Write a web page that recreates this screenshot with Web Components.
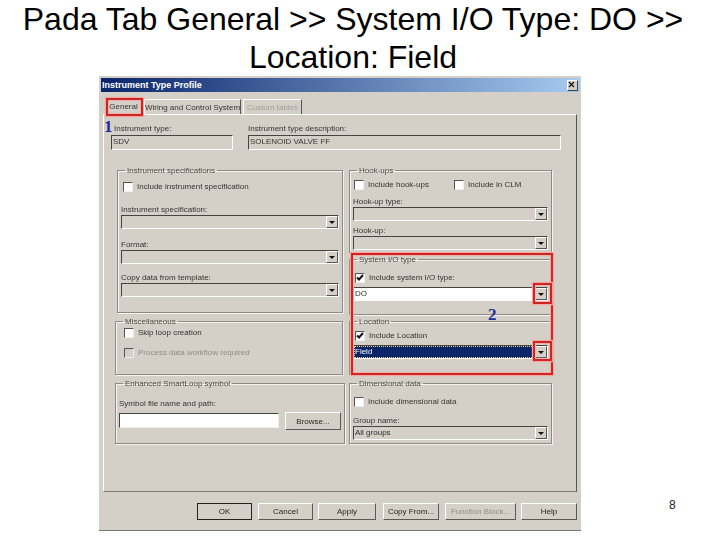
<!DOCTYPE html>
<html>
<head>
<meta charset="utf-8">
<style>
  html, body { margin: 0; background: #fff; }
  body { width: 720px; height: 540px; overflow: hidden; font-family: "Liberation Sans", Arial, sans-serif; }
</style>
</head>
<body>
<slide-page>
  <span slot="title">Pada Tab General &gt;&gt; System I/O Type: DO &gt;&gt;<br>Location: Field</span>
  <profile-dialog></profile-dialog>
</slide-page>

<script>
class SlidePage extends HTMLElement {
    connectedCallback() {
        this.attachShadow({ mode: 'open' });
        this.shadowRoot.innerHTML = `
            <style>
                :host { display: block; }
                h1 {
                    margin: 0;
                    height: 76px;
                    padding-right: 14px;
                    font: 400 32px/38px "Liberation Sans", Arial, sans-serif;
                    color: #000;
                    text-align: center;
                    white-space: nowrap;
                }
                .row { display: flex; padding-left: 99px; }
                .num {
                    margin: 422px 0 0 88px;
                    font-size: 12px;
                    line-height: 14px;
                    color: #222;
                }
            </style>
            <h1><slot name="title"></slot></h1>
            <div class="row">
                <slot></slot>
                <div class="num">8</div>
            </div>
        `;
    }
}

class WinButton extends HTMLElement {
    connectedCallback() {
        const def = this.hasAttribute('default');
        const off = this.hasAttribute('disabled');
        this.attachShadow({ mode: 'open' });
        this.shadowRoot.innerHTML = `
            <style>
                :host { display: block; flex: none; }
                div {
                    box-sizing: border-box;
                    height: 100%;
                    display: flex;
                    align-items: center;
                    justify-content: center;
                    font-size: 8px;
                    color: ${off ? '#8e8c86' : '#26261f'};
                    background: #d4d0c8;
                    border: 1px solid;
                    border-color: #fff #5a5955 #5a5955 #fff;
                    ${def ? 'outline: 1px solid #222; outline-offset: -1px;' : ''}
                }
            </style>
            <div><slot></slot></div>
        `;
    }
}

class WinCheck extends HTMLElement {
    connectedCallback() {
        const checked = this.hasAttribute('checked');
        this.attachShadow({ mode: 'open' });
        this.shadowRoot.innerHTML = `
            <style>
                :host { display: flex; align-items: center; height: 9px; font-size: 8px; color: var(--ink, #33332d); white-space: nowrap; }
                i {
                    flex: none;
                    box-sizing: border-box;
                    width: 10px;
                    height: 10px;
                    margin-right: 4px;
                    background: ${this.hasAttribute('disabled') ? '#d4d0c8' : '#fff'};
                    border: 1px solid;
                    border-color: #555 #eee #eee #555;
                    display: block;
                }
                svg { display: block; }
            </style>
            <i>${checked ? '<svg width="8" height="8" viewBox="0 0 8 8"><path d="M1 3.5 L3 5.5 L7 1" fill="none" stroke="#111" stroke-width="2"/></svg>' : ''}</i>
            <slot></slot>
        `;
    }
}

class WinCombo extends HTMLElement {
    connectedCallback() {
        const label = this.getAttribute('label');
        const value = this.getAttribute('value') || '';
        const mode = this.getAttribute('mode') || 'off';
        const bg = mode === 'on' ? '#fff' : mode === 'sel' ? '#0a246a' : '#d4d0c8';
        this.attachShadow({ mode: 'open' });
        this.shadowRoot.innerHTML = `
            <style>
                :host { display: block; font-size: 8px; color: #33332d; }
                .lab { height: 11px; line-height: 11px; white-space: nowrap; }
                .box {
                    box-sizing: border-box;
                    height: 14px;
                    display: flex;
                    align-items: center;
                    justify-content: space-between;
                    padding-left: 1px;
                    background: ${bg};
                    border: 1px solid;
                    border-color: #45443f #fff #fff #45443f;
                    color: ${mode === 'sel' ? '#fff' : '#2b2b27'};
                }
                .val { flex: 1; line-height: 10px; ${mode === 'sel' ? 'outline: 1px dotted #e8d890; outline-offset: 0;' : ''} }
                .btn {
                    flex: none;
                    box-sizing: border-box;
                    width: 12px;
                    height: 12px;
                    display: flex;
                    align-items: center;
                    justify-content: center;
                    background: #d4d0c8;
                    border: 1px solid;
                    border-color: #fff #555 #555 #fff;
                }
                .btn::after {
                    content: '';
                    border: 3px solid transparent;
                    border-top: 3px solid #111;
                    border-bottom: 0;
                }
            </style>
            ${label ? `<div class="lab">${label}</div>` : ''}
            <div class="box"><span class="val">${value}</span><span class="btn"></span></div>
        `;
    }
}

class GroupBox extends HTMLElement {
    connectedCallback() {
        const title = this.getAttribute('title');
        this.removeAttribute('title');
        this.attachShadow({ mode: 'open' });
        this.shadowRoot.innerHTML = `
            <style>
                :host { display: block; box-sizing: border-box; font-size: 8px; }
                fieldset {
                    box-sizing: border-box;
                    height: 100%;
                    margin: 0;
                    padding: 0 3px;
                    border: 1px solid #8b8a84;
                    box-shadow: 1px 1px 0 #f4f3ef, inset 1px 1px 0 #f4f3ef;
                }
                legend {
                    margin-left: 4px;
                    padding: 0 2px;
                    height: 9px;
                    line-height: 9px;
                    color: #4a4a44;
                    white-space: nowrap;
                }
            </style>
            <fieldset>
                <legend>${title}</legend>
                <slot></slot>
            </fieldset>
        `;
    }
}

class RedMark extends HTMLElement {
    connectedCallback() {
        const [x, y, w, h] = this.getAttribute('rect').split(',');
        this.attachShadow({ mode: 'open' });
        this.shadowRoot.innerHTML = `
            <style>
                :host {
                    position: absolute;
                    left: ${x}px; top: ${y}px; width: ${w}px; height: ${h}px;
                    box-sizing: border-box;
                    border: 2px solid #cf2424;
                    box-shadow: 0 0 1px 1px #f5a8a0, inset 0 0 1px 1px #f0b0a8;
                }
            </style>
        `;
    }
}

class ProfileDialog extends HTMLElement {
    connectedCallback() {
        this.attachShadow({ mode: 'open' });
        this.shadowRoot.innerHTML = `
            <style>
                :host {
                    display: block;
                    position: relative;
                    flex: none;
                    box-sizing: border-box;
                    width: 482px;
                    height: 455px;
                    padding: 2px 1px 0 2px;
                    background: #d4d0c8;
                    border-bottom: 1px solid #77766f;
                    font-family: "Liberation Sans", Arial, sans-serif;
                }
                .title {
                    display: flex;
                    align-items: center;
                    justify-content: space-between;
                    height: 14px;
                    padding: 0 2px 0 1px;
                    background: linear-gradient(90deg, #0a246a, #a6caf0);
                    color: #fff;
                    font-size: 9px;
                    font-weight: 700;
                }
                .close {
                    width: 9px; height: 9px;
                    background: #d4d0c8;
                    border: 1px solid; border-color: #fff #444 #444 #fff;
                    display: block;
                }
                .close svg { display: block; }
                .tabs { display: flex; align-items: flex-end; height: 16px; margin: 6px 0 0 4px; font-size: 8px; color: #33332d; white-space: nowrap; filter: blur(.3px); }
                .tab {
                    box-sizing: border-box;
                    height: 15px;
                    display: flex;
                    align-items: center;
                    justify-content: center;
                    border: 1px solid; border-color: #fff #555 transparent #fff;
                    border-bottom: 0;
                }
                .tab.cur { height: 16px; width: 37px; }
                .tab.dim { color: #a09e97; }
                .pane {
                    box-sizing: border-box;
                    width: 474px;
                    height: 378px;
                    margin-left: 2px;
                    padding: 8px 0 0 11px;
                    border: 1px solid; border-color: #fff #55544f #7b7a74 #fff;
                    font-size: 8px;
                    color: #33332d;
                }
                .blur { filter: blur(.3px); }
                .top { display: grid; grid-template-columns: 122px 313px; column-gap: 15px; margin-left: -4px; }
                .top-lab { height: 12px; line-height: 11px; white-space: nowrap; }
                .ro {
                    box-sizing: border-box;
                    height: 15px;
                    padding-left: 1px;
                    line-height: 12px;
                    border: 1px solid; border-color: #45443f #fff #fff #45443f;
                }
                .cols { display: grid; grid-template-columns: 228px 203px; column-gap: 6px; margin-top: 16px; }
                .col { display: flex; flex-direction: column; }
                .inp {
                    box-sizing: border-box;
                    width: 160px; height: 15px;
                    background: #fff;
                    border: 1px solid; border-color: #45443f #eee #eee #45443f;
                }
                .browse { display: flex; align-items: flex-start; gap: 6px; margin-top: 3px; }
                .browse > div { margin-top: 1px; }
                .actions { display: flex; height: 17px; margin: 11px 0 0 96px; filter: blur(.3px); }
                .big {
                    position: absolute;
                    font: 700 17px/17px "Liberation Serif", "Times New Roman", serif;
                    color: #1c2a9c;
                }
            </style>
            <div class="title">
                <span>Instrument Type Profile</span>
                <span class="close"><svg width="7" height="7" viewBox="0 0 7 7"><path d="M1 1 L6 6 M6 1 L1 6" stroke="#111" stroke-width="1.2"/></svg></span>
            </div>
            <div class="tabs">
                <div class="tab cur">General</div>
                <div class="tab" style="width:97px;margin-left:2px">Wiring and Control System</div>
                <div class="tab dim" style="width:59px;margin-left:2px">Custom tables</div>
            </div>
            <div class="pane">
                <div class="blur">
                <div class="top">
                    <div class="top-lab" style="padding-left:3px">Instrument type:</div>
                    <div class="top-lab">Instrument type description:</div>
                    <div class="ro">SDV</div>
                    <div class="ro">SOLENOID VALVE FF</div>
                </div>
                <div class="cols">
                    <div class="col">
                        <group-box title="Instrument specifications" style="height:147px;margin-left:2px;width:226px">
                            <win-check style="margin:7px 0 0 2px">Include instrument specification</win-check>
                            <win-combo label="Instrument specification:" style="margin-top:13px"></win-combo>
                            <win-combo label="Format:" style="margin-top:10px"></win-combo>
                            <win-combo label="Copy data from template:" style="margin-top:8px"></win-combo>
                        </group-box>
                        <group-box title="Miscellaneous" style="height:58px;margin-top:4px">
                            <win-check style="margin:2px 0 0 5px">Skip loop creation</win-check>
                            <win-check disabled style="margin:11px 0 0 5px;--ink:#8e8c86">Process data workflow required</win-check>
                        </group-box>
                        <group-box title="Enhanced SmartLoop symbol" style="height:65px;margin-top:4px">
                            <div style="margin-top:10px;height:11px;line-height:11px;color:#33332d">Symbol file name and path:</div>
                            <div class="browse">
                                <div class="inp"></div>
                                <win-button style="width:56px;height:18px;margin:0">Browse...</win-button>
                            </div>
                        </group-box>
                    </div>
                    <div class="col">
                        <group-box title="Hook-ups" style="height:87px">
                            <div style="display:flex;margin:5px 0 0 1px">
                                <win-check style="width:100px">Include hook-ups</win-check>
                                <win-check>Include in CLM</win-check>
                            </div>
                            <win-combo label="Hook-up type:" style="margin-top:7px"></win-combo>
                            <win-combo label="Hook-up:" style="margin-top:4px"></win-combo>
                        </group-box>
                        <group-box title="System I/O type" style="height:60px;margin-top:2px">
                            <win-check checked style="margin:9px 0 0 2px">Include system I/O type:</win-check>
                            <win-combo mode="on" value="DO" style="margin-top:5px"></win-combo>
                        </group-box>
                        <group-box title="Location" style="height:58px;margin-top:2px">
                            <win-check checked style="margin:5px 0 0 2px">Include Location</win-check>
                            <win-combo mode="sel" value="Field" style="margin-top:5px"></win-combo>
                        </group-box>
                        <group-box title="Dimensional data" style="height:65px;margin-top:4px">
                            <win-check style="margin:9px 0 0 1px">Include dimensional data</win-check>
                            <win-combo label="Group name:" value="All groups" style="margin-top:9px"></win-combo>
                        </group-box>
                    </div>
                </div>
                </div>
            </div>
            <div class="actions">
                <win-button default style="width:55px">OK</win-button>
                <win-button style="width:55px;margin-left:6px">Cancel</win-button>
                <win-button style="width:58px;margin-left:5px">Apply</win-button>
                <win-button style="width:56px;margin-left:7px">Copy From...</win-button>
                <win-button disabled style="width:71px;margin-left:6px">Function Block...</win-button>
                <win-button style="width:56px;margin-left:5px">Help</win-button>
            </div>
            <red-mark rect="7,22,37,18"></red-mark>
            <red-mark rect="252,177,202,122"></red-mark>
            <red-mark rect="434,207,19,21"></red-mark>
            <red-mark rect="434,265,19,20"></red-mark>
            <span class="big" style="left:5px;top:42px">1</span>
            <span class="big" style="left:389px;top:230px">2</span>
        `;
    }
}

customElements.define('slide-page', SlidePage);
customElements.define('win-button', WinButton);
customElements.define('win-check', WinCheck);
customElements.define('win-combo', WinCombo);
customElements.define('group-box', GroupBox);
customElements.define('red-mark', RedMark);
customElements.define('profile-dialog', ProfileDialog);
</script>
</body>
</html>
